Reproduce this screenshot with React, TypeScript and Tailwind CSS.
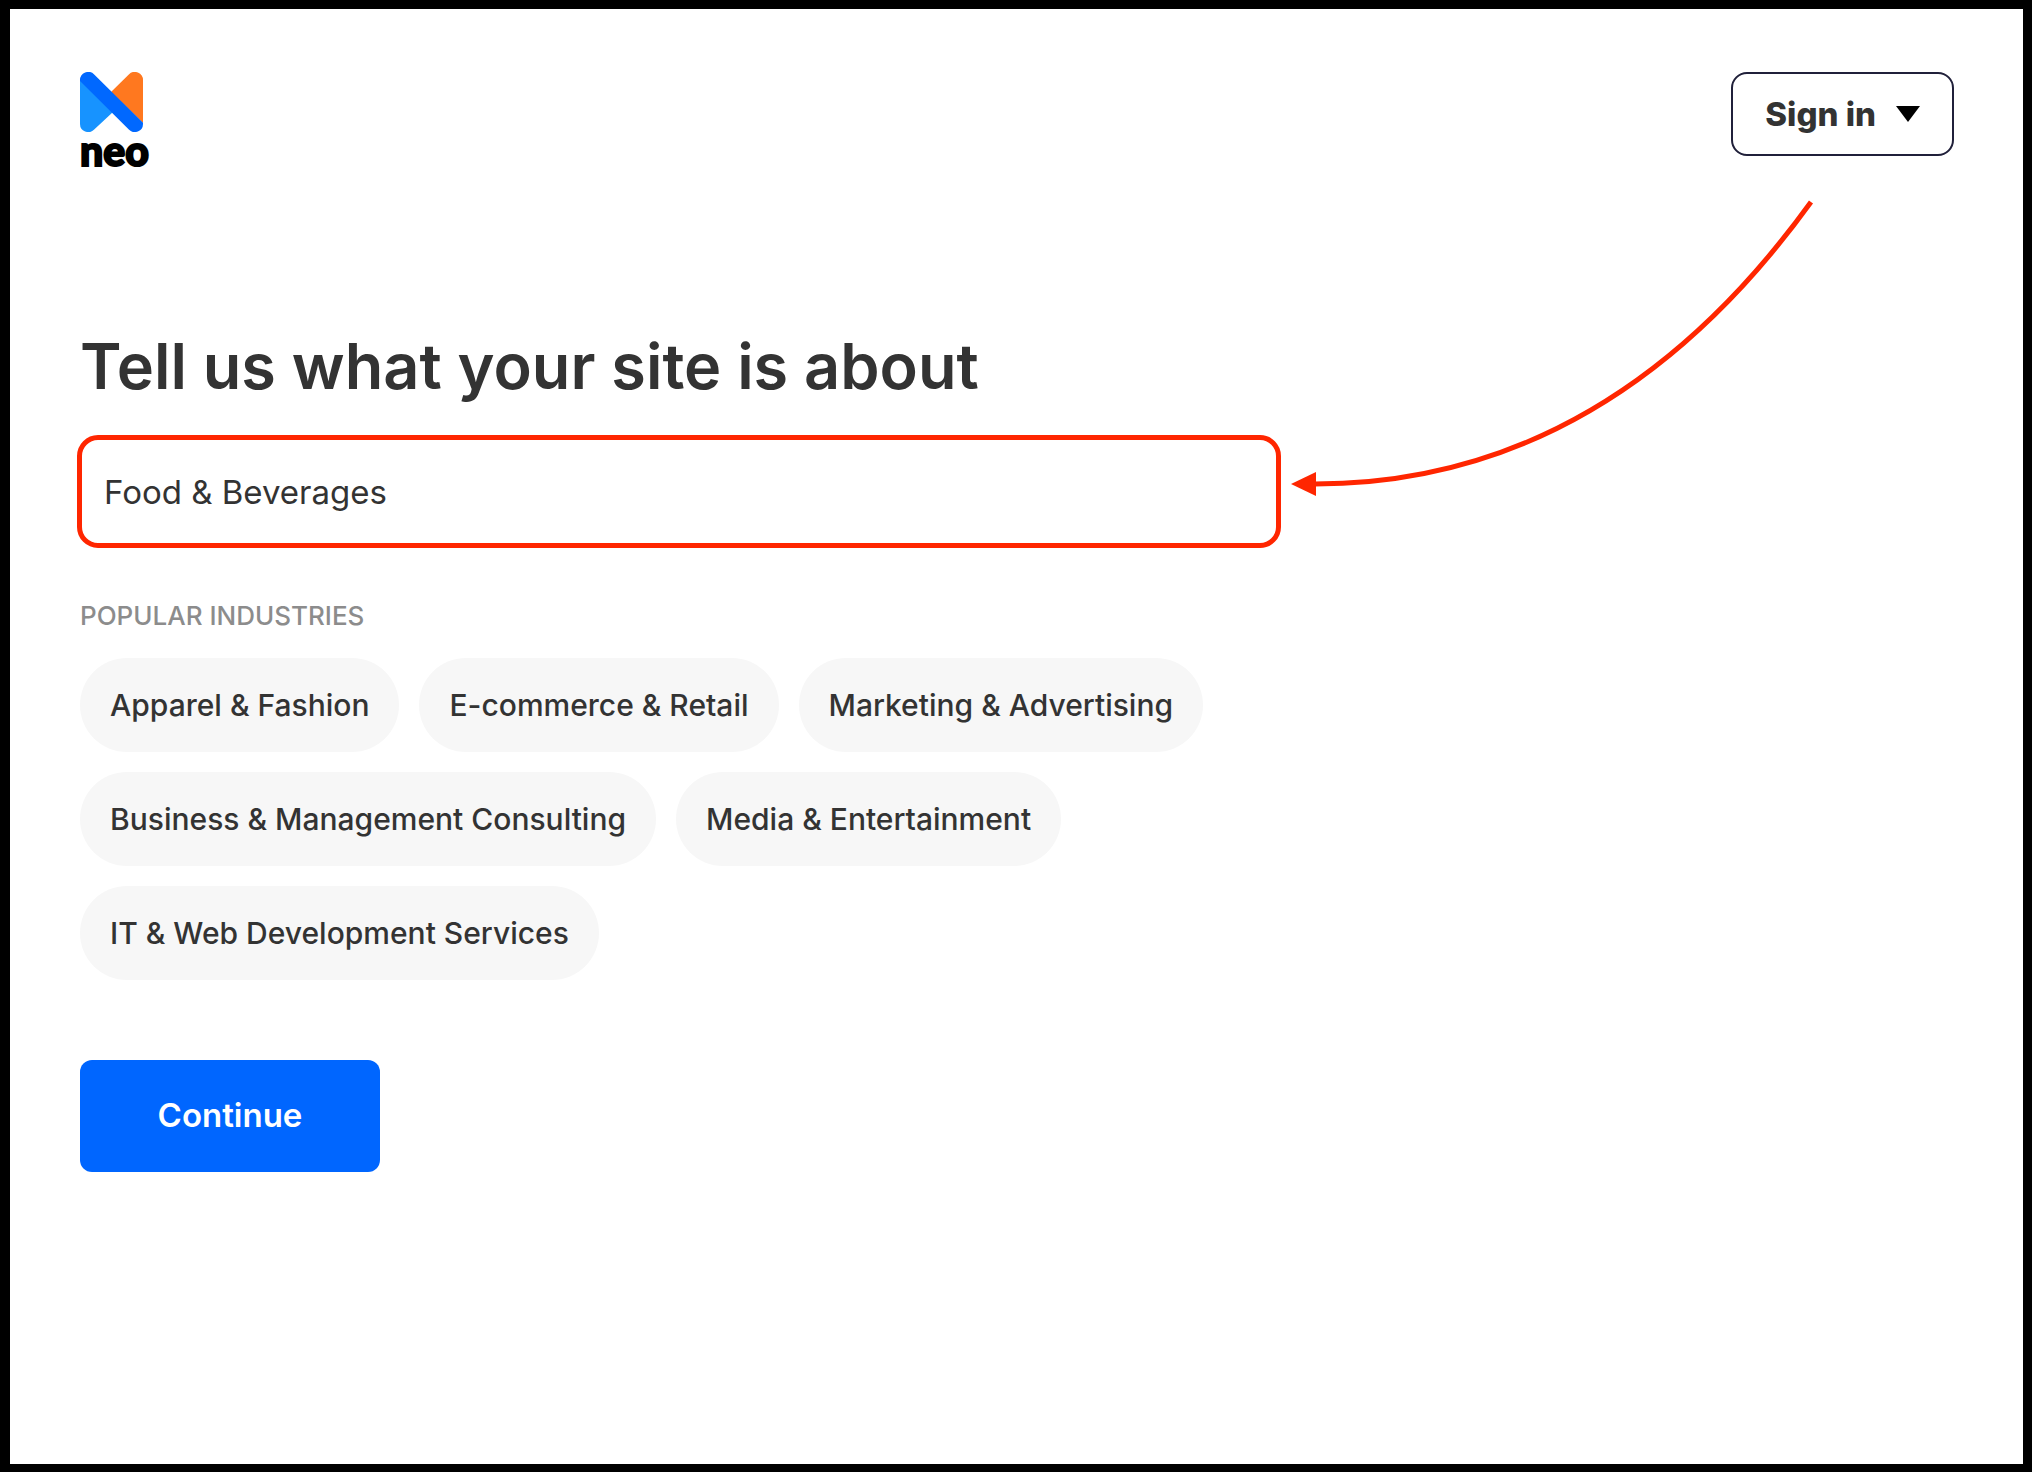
import React, { useState } from "react";

const industries = [
    "Apparel & Fashion",
    "E-commerce & Retail",
    "Marketing & Advertising",
    "Business & Management Consulting",
    "Media & Entertainment",
    "IT & Web Development Services",
];

const Logo: React.FC = () => (
    <a href="#" className="flex flex-col text-black">
        <svg width="63" height="60" viewBox="0 0 63 60" aria-hidden="true">
            <path d="M0 8 V51.7 A8.3 8.3 0 0 0 14.2 57.6 L33 40 Z" fill="#1793ff" />
            <path d="M63 51 V8.3 A8.3 8.3 0 0 0 48.8 2.4 L31 20 Z" fill="#ff781f" />
            <path
                d="M0 9 V8.3 A8.3 8.3 0 0 1 14.2 2.4 L63 50.7 V51.7 A8.3 8.3 0 0 1 48.8 57.6 Z"
                fill="#0068ff"
            />
        </svg>
        <span className="font-['Lato'] text-[41px] leading-[38px] font-black [-webkit-text-stroke:2px_#000000]">
            neo
        </span>
    </a>
);

// Curved pointer that ends at the right edge of the industry field
const Pointer: React.FC = () => (
    <svg
        className="absolute bottom-[50px] left-full"
        width="540"
        height="300"
        viewBox="0 0 540 300"
        fill="none"
        aria-hidden="true"
    >
        <path d="M34 286 Q326 286 530 4" stroke="#ff2600" strokeWidth="5" />
        <path d="M10 286 L35 274 V298 Z" fill="#ff2600" />
    </svg>
);

const App: React.FC = () => {
    const [industry, setIndustry] = useState("Food & Beverages");

    return (
        <div className="min-h-screen border-t-9 border-r-9 border-b-8 border-l-10 border-black bg-white pt-[63px] pr-[69px] pb-16 pl-[70px] font-['Inter',sans-serif] text-[#333333]">
            <header className="flex items-start justify-between">
                <Logo />
                <button
                    type="button"
                    className="flex h-[84px] items-center gap-5 rounded-2xl border-2 border-[#20203a] px-8 text-[33px] leading-10 font-extrabold"
                >
                    Sign in
                    <svg width="24" height="16" viewBox="0 0 24 16" aria-hidden="true">
                        <path d="M0 0 H24 L12 16 Z" fill="#000000" />
                    </svg>
                </button>
            </header>

            <main className="mt-[156px]">
                <h1>
                    <label htmlFor="industry" className="text-[63px] leading-20 font-semibold">
                        Tell us what your site is about
                    </label>
                </h1>
                <div className="relative -ml-[3px] mt-[29px] w-full max-w-[1204px]">
                    <input
                        id="industry"
                        type="text"
                        value={industry}
                        onChange={(e) => setIndustry(e.target.value)}
                        className="block h-[113px] w-full rounded-[21px] border-5 border-[#ff2600] px-[22px] text-[33px] outline-none"
                    />
                    <Pointer />
                </div>

                <h2 className="mt-12 text-[26px] leading-10 font-medium text-[#8c8c8c]">
                    POPULAR INDUSTRIES
                </h2>
                <div className="mt-[22px] flex max-w-[1204px] flex-wrap gap-5">
                    {industries.map((name) => (
                        <button
                            key={name}
                            type="button"
                            onClick={() => setIndustry(name)}
                            className="h-[94px] rounded-full bg-[#f7f7f7] px-[30px] text-[30px] font-medium"
                        >
                            {name}
                        </button>
                    ))}
                </div>

                <button
                    type="submit"
                    className="mt-20 h-28 w-[300px] rounded-xl bg-[#0066ff] text-[33px] font-semibold text-white"
                >
                    Continue
                </button>
            </main>
        </div>
    );
};

export default App;
